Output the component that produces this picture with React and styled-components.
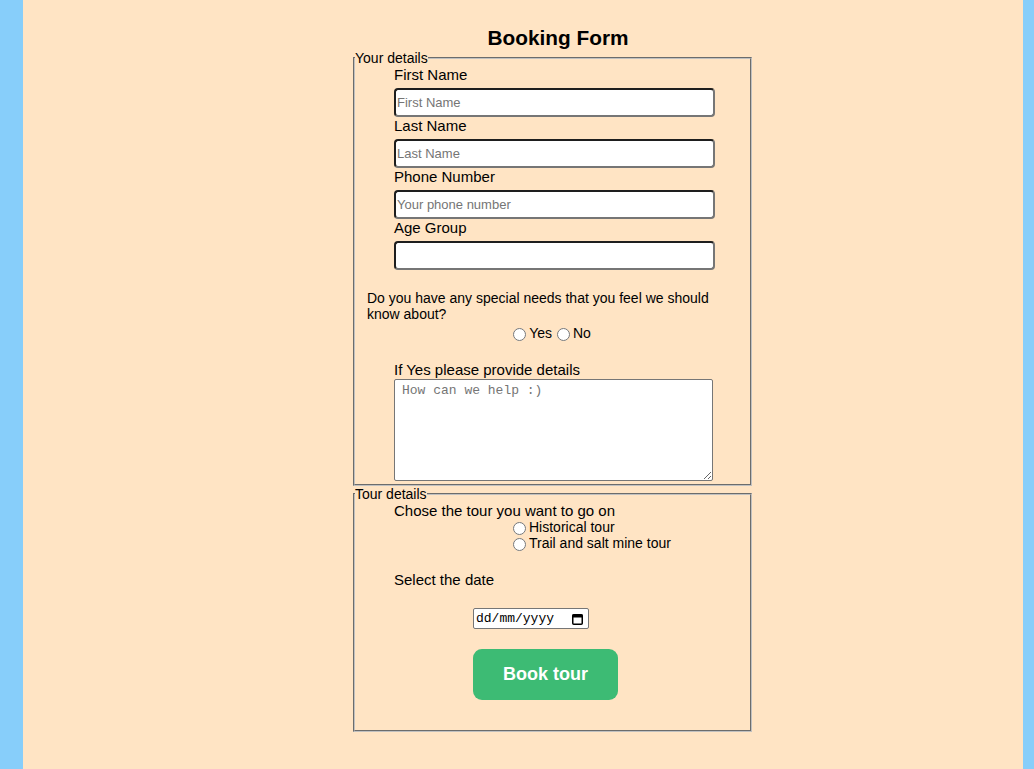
import React from "react";
import styled, { createGlobalStyle } from "styled-components";

const GlobalStyle = createGlobalStyle`
  html, body {
    margin: 0;
    padding: 0;
    background: #87cefa;
    font-family: "Liberation Sans", Arial, sans-serif;
  }
`;

export default function App() {
  return (
    <>
      <GlobalStyle />
      <Page>
        <Form onSubmit={(e) => e.preventDefault()}>
          <Title>Booking Form</Title>

          {/* your details */}
          <Fieldset>
            <Legend>Your details</Legend>
            <Field>
              <Label>First Name</Label>
              <TextInput type="text" placeholder="First Name" />
            </Field>
            <Field>
              <Label>Last Name</Label>
              <TextInput type="text" placeholder="Last Name" />
            </Field>
            <Field>
              <Label>Phone Number</Label>
              <TextInput type="tel" placeholder="Your phone number" />
            </Field>
            <Field>
              <Label>Age Group</Label>
              <TextInput type="text" />
            </Field>

            <Question>
              Do you have any special needs that you feel we should know about?
              <RadioRow>
                <Radio type="radio" name="needs" />
                Yes
                <Radio type="radio" name="needs" />
                No
              </RadioRow>
            </Question>

            <Field $top={20}>
              <Label>If Yes please provide details</Label>
              <TextArea placeholder="How can we help :)" />
            </Field>
          </Fieldset>

          {/* tour details */}
          <Fieldset $bottom={30}>
            <Legend>Tour details</Legend>
            <Field>
              <Label>Chose the tour you want to go on</Label>
            </Field>
            <TourList>
              <TourOption>
                <Radio type="radio" name="tour" />
                Historical tour
              </TourOption>
              <TourOption>
                <Radio type="radio" name="tour" />
                Trail and salt mine tour
              </TourOption>
            </TourList>

            <Field $top={20}>
              <Label>Select the date</Label>
            </Field>
            <Centered $top={15}>
              <DateBox>
                <DateText type="text" placeholder="dd/mm/yyyy" />
                <CalendarIcon width="11" height="12" viewBox="0 0 11 12">
                  <rect x="0.75" y="1.75" width="9.5" height="9.5" rx="1" fill="none" stroke="#000" strokeWidth="1.5" />
                  <rect x="0.5" y="1.5" width="10" height="3" fill="#000" />
                </CalendarIcon>
              </DateBox>
            </Centered>
            <Centered $top={20}>
              <BookButton type="submit">Book tour</BookButton>
            </Centered>
          </Fieldset>
        </Form>
      </Page>
    </>
  );
}

const Page = styled.div`
  margin-left: 23px;
  width: 1000px;
  min-height: 100vh;
  background: #ffe4c4;
  padding-top: 26px;
  box-sizing: border-box;
`;

const Form = styled.form`
  margin-left: 330px;
  width: 400px;
  display: flex;
  flex-direction: column;
`;

const Title = styled.h2`
  margin: 0;
  padding-left: 10px;
  font-size: 20.8px;
  line-height: 24px;
  font-weight: bold;
  text-align: center;
  color: #000;
`;

const Fieldset = styled.fieldset`
  margin: 0;
  padding: 0 0 ${(p) => p.$bottom || 3}px 0;
  border: 2px groove rgb(192, 192, 192);
  width: 399px;
  box-sizing: border-box;
  min-width: 0;
`;

const Legend = styled.legend`
  padding: 0;
  font-size: 14px;
  line-height: 16px;
  color: #000;
`;

const Field = styled.div`
  display: flex;
  flex-direction: column;
  align-items: flex-start;
  padding-left: 39px;
  margin-top: ${(p) => p.$top || 0}px;
`;

const Label = styled.label`
  font-size: 15px;
  line-height: 18px;
  color: #000;
  margin-bottom: 4px;
`;

const TextInput = styled.input`
  width: 321px;
  height: 29px;
  box-sizing: border-box;
  border: 2px solid;
  border-color: #1e1e1e #767676 #767676 #1e1e1e;
  border-radius: 4px;
  padding: 0 1px;
  font-family: "Liberation Sans", Arial, sans-serif;
  font-size: 13px;
  background: #fff;
  outline: none;

  &::placeholder {
    color: #757575;
  }
`;

const Question = styled.div`
  margin-top: 20px;
  padding: 0 12px;
  font-size: 14px;
  line-height: 16px;
  color: #000;
`;

const RadioRow = styled.div`
  text-align: center;
  margin-top: 3px;
  padding-right: 6px;
  font-size: 14px;
  line-height: 16px;
`;

const Radio = styled.input`
  width: 13px;
  height: 13px;
  margin: 3px 3px 0 5px;
  vertical-align: top;
`;

const TextArea = styled.textarea`
  display: block;
  width: 319px;
  height: 102px;
  box-sizing: border-box;
  margin-top: -4px;
  border: 1px solid #767676;
  border-radius: 2px;
  padding: 3px 7px;
  font-family: "Liberation Mono", "DejaVu Sans Mono", monospace;
  font-size: 13px;
  background: #fff;
  resize: both;

  &::placeholder {
    color: #757575;
  }
`;

const TourList = styled.div`
  display: flex;
  flex-direction: column;
  padding-left: 153px;
  margin-top: -5px;
`;

const TourOption = styled.label`
  font-size: 14px;
  line-height: 16px;
  color: #000;
`;

const Centered = styled.div`
  padding-left: 118px;
  margin-top: ${(p) => p.$top || 0}px;
`;

const DateBox = styled.div`
  display: flex;
  align-items: center;
  width: 116px;
  height: 21px;
  box-sizing: border-box;
  border: 1px solid #767676;
  border-radius: 2px;
  background: #fff;
  padding: 0 5px 0 2px;
`;

const DateText = styled.input`
  flex: 1;
  min-width: 0;
  border: none;
  outline: none;
  padding: 0;
  background: transparent;
  font-family: "Liberation Mono", "DejaVu Sans Mono", monospace;
  font-size: 13px;
  color: #000;

  &::placeholder {
    color: #000;
  }
`;

const CalendarIcon = styled.svg`
  flex: none;
  display: block;
`;

const BookButton = styled.button`
  display: block;
  width: 145px;
  height: 51px;
  border: none;
  border-radius: 9px;
  background: #3dbb74;
  color: #fff;
  font-family: "Liberation Sans", Arial, sans-serif;
  font-size: 18px;
  font-weight: bold;
  cursor: pointer;
`;
